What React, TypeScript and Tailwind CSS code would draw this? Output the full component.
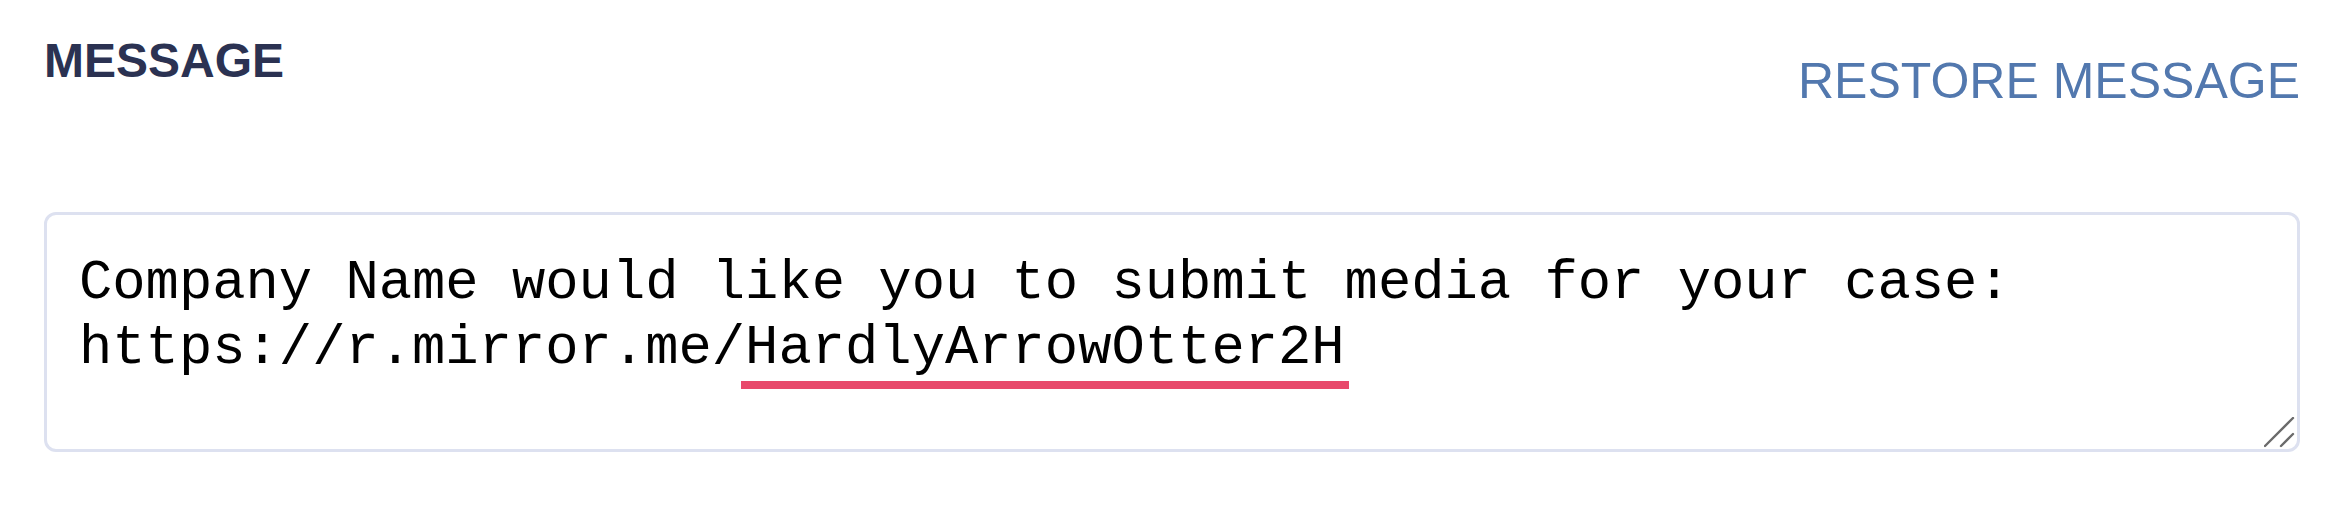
import { useState } from "react";

const MESSAGE_TEXT =
  "Company Name would like you to submit media for your case:\nhttps://r.mirror.me/HardlyArrowOtter2H";

const MessageEditor = () => {
  const [message, setMessage] = useState(MESSAGE_TEXT);

  return (
    <section className="w-full bg-white pl-[44px] pr-[42px] pt-[33px] font-['Liberation_Sans',Arial,sans-serif]">
      <div className="flex items-start justify-between">
        <h2 className="text-[48px] leading-[56px] font-bold text-[#2b3252]">MESSAGE</h2>
        <button
          className="mt-[20px] text-[50px] leading-[56px] text-[#5278ae]"
          onClick={() => setMessage(MESSAGE_TEXT)}
        >
          RESTORE MESSAGE
        </button>
      </div>

      <div className="relative mt-[103px]">
        <textarea
          value={message}
          onChange={(e) => setMessage(e.target.value)}
          spellCheck={false}
          className="block h-[240px] w-full resize-none rounded-[12px] border-[3px] border-[#dde1f0] bg-white pl-[32px] pr-[32px] pt-[36px] font-['Liberation_Mono','Courier_New',monospace] text-[55.5px] leading-[65px] text-black outline-none"
        />
        {/* highlight under the generated link code */}
        <span className="pointer-events-none absolute left-[697px] top-[169px] h-[8px] w-[608px] bg-[#e8496b]" />
        {/* resize grip */}
        <svg
          className="pointer-events-none absolute bottom-[3px] right-[4px]"
          width="32"
          height="32"
          viewBox="0 0 32 32"
          fill="none"
          stroke="#6b6b6b"
          strokeWidth="2.4"
          strokeLinecap="round"
        >
          <line x1="1" y1="29" x2="29" y2="1" />
          <line x1="17" y1="29" x2="29" y2="17" />
        </svg>
      </div>
    </section>
  );
};

export default function App() {
  return <MessageEditor />;
}
